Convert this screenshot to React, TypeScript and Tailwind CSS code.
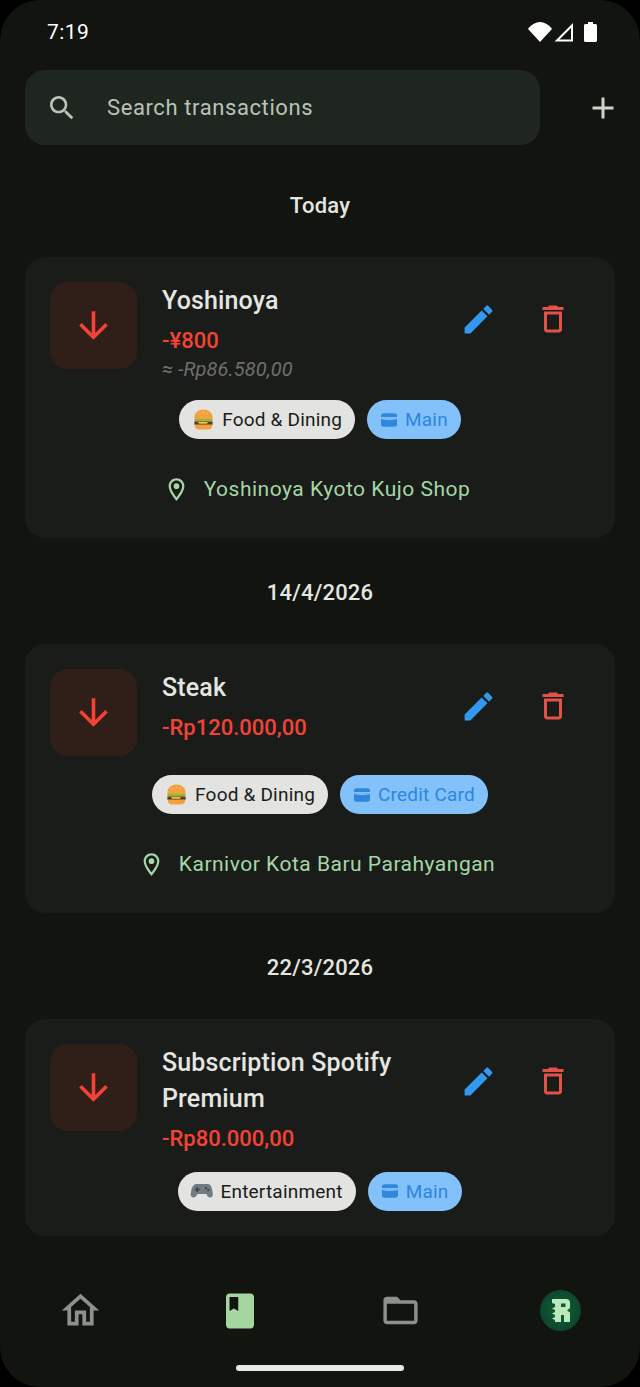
import React from 'react'

type Tx = {
  title: string
  amount: string
  converted?: string
  category: string
  categoryIcon: 'burger' | 'gamepad'
  account: string
  location?: string
}

const sections: { date: string; tx: Tx }[] = [
  {
    date: 'Today',
    tx: {
      title: 'Yoshinoya',
      amount: '-¥800',
      converted: '≈ -Rp86.580,00',
      category: 'Food & Dining',
      categoryIcon: 'burger',
      account: 'Main',
      location: 'Yoshinoya Kyoto Kujo Shop',
    },
  },
  {
    date: '14/4/2026',
    tx: {
      title: 'Steak',
      amount: '-Rp120.000,00',
      category: 'Food & Dining',
      categoryIcon: 'burger',
      account: 'Credit Card',
      location: 'Karnivor Kota Baru Parahyangan',
    },
  },
  {
    date: '22/3/2026',
    tx: {
      title: 'Subscription Spotify Premium',
      amount: '-Rp80.000,00',
      category: 'Entertainment',
      categoryIcon: 'gamepad',
      account: 'Main',
    },
  },
]

function Icon({ d, className }: { d: string; className: string }) {
  return (
    <svg viewBox="0 0 24 24" fill="currentColor" className={className}>
      <path d={d} />
    </svg>
  )
}

function Burger() {
  return (
    <svg viewBox="0 0 24 24" className="w-[23px] h-[23px] shrink-0 ml-[1px] mr-[-1px]">
      <path d="M2.500 10.500C2.500 4.500 7 1.500 12 1.500s9.500 3 9.500 9c0 .8-.5 1.200-1.200 1.200H3.700c-.7 0-1.200-.4-1.200-1.200z" fill="#f2a23a" />
      <circle cx="8" cy="5.500" r=".6" fill="#ffd98a" />
      <circle cx="12" cy="4.300" r=".6" fill="#ffd98a" />
      <circle cx="16" cy="5.500" r=".6" fill="#ffd98a" />
      <path d="M2.500 11.500h19v1.800c-1.500.7-3 .3-4.500.8-1.500.5-3 .3-5-.2-2-.4-3 .6-5 .2-2-.3-3 .2-4.500-.8z" fill="#8fb83f" />
      <path d="M2.500 14h19v3.500h-19z" fill="#5d3a1a" />
      <path d="M6 14.500h11l-1.500 2h-8z" fill="#fbc02d" />
      <path d="M3 17.500h18v1.200c0 2.200-2 3.800-4.500 3.800h-9C5 22.500 3 20.900 3 18.700z" fill="#f2a23a" />
    </svg>
  )
}

function Gamepad() {
  return (
    <svg viewBox="0 0 24 24" className="w-[24px] h-[24px] shrink-0 mr-[-2px]">
      <path
        d="M6.500 5h11c2.500 0 3.800 1.700 4.300 4.200l1 5.300c.4 2.300-.8 4-2.600 4-1.300 0-2.200-.7-3-1.700L16.500 15h-9l-1.200 1.800c-.8 1-1.700 1.700-3 1.700-1.800 0-3-1.700-2.600-4l1-5.300C3.200 6.700 4 5 6.500 5z"
        fill="#737a80"
      />
      <path d="M6.500 8h1.500v1.700h1.700v1.500H8v1.700H6.500v-1.700H4.800V9.700h1.700z" fill="#3c4043" />
      <circle cx="16" cy="9" r="1.100" fill="#3c4043" />
      <circle cx="18.200" cy="11.200" r="1.100" fill="#3c4043" />
    </svg>
  )
}

function Wallet() {
  return (
    <svg viewBox="0 0 18 15" className="w-[16px] h-[14px] shrink-0" fill="#2f86dc">
      <path d="M3 0h12a3 3 0 0 1 3 3v1H0V3a3 3 0 0 1 3-3z" />
      <path d="M0 5.500h18V12a3 3 0 0 1-3 3H3a3 3 0 0 1-3-3z" />
      <path d="M0 6.500c5 1.500 13 1.500 18 0v-1H0z" fill="#82c1fa" />
    </svg>
  )
}

function TxCard({ tx }: { tx: Tx }) {
  return (
    <div className="bg-[#1a1c19] rounded-[20px] p-[25px]">
      <div className="flex items-start">
        <div className="w-[87px] h-[87px] shrink-0 rounded-[18px] bg-[#301f19] flex items-center justify-center">
          <Icon
            className="w-[43px] h-[43px] text-[#f44336]"
            d="M20 12l-1.410-1.410L13 16.170V4h-2v12.170l-5.580-5.590L4 12l8 8 8-8z"
          />
        </div>
        <div className="flex-1 min-w-0 pl-[25px]">
          <div className="text-[25px] leading-[36px] font-medium tracking-[0.15px] text-[#e4e6e1] pr-[8px] pt-[1px] mb-[-1px]">
            {tx.title}
          </div>
          <div className="text-[22px] leading-[30px] font-medium text-[#f44336] mt-[7.500px] mb-[-1px]">{tx.amount}</div>
          {tx.converted && (
            <div className="text-[20px] leading-[24px] italic tracking-[0.1px] text-[#6d6f6b] mt-[2.500px]">{tx.converted}</div>
          )}
        </div>
        <div className="flex shrink-0">
          <button className="w-[74px] h-[74px] flex items-center justify-center text-[#3399f0]">
            <Icon
              className="w-[37px] h-[37px] ml-[-1px]"
              d="M3 17.250V21h3.750L17.810 9.940l-3.750-3.750L3 17.250zM20.710 7.040c.39-.39.39-1.020 0-1.410l-2.340-2.340c-.39-.39-1.020-.39-1.410 0l-1.830 1.830 3.750 3.750 1.830-1.830z"
            />
          </button>
          <button className="w-[74px] h-[74px] flex items-center justify-center text-[#e25249]">
            <Icon
              className="w-[36px] h-[36px]"
              d="M6 19c0 1.100.9 2 2 2h8c1.100 0 2-.9 2-2V7H6v12zM8 9h8v10H8V9zm7.500-5l-1-1h-5l-1 1H5v2h14V4z"
            />
          </button>
        </div>
      </div>

      <div className="flex justify-center gap-[12px] mt-[19px]">
        <div className="h-[39px] rounded-full bg-[#e3e3e1] flex items-center gap-[8px] pl-[12px] pr-[13px] text-[#1a1c19] text-[19px] tracking-[0.2px]">
          {tx.categoryIcon === 'burger' ? <Burger /> : <Gamepad />}
          <span className="pt-[2px]">{tx.category}</span>
        </div>
        <div className="h-[39px] rounded-full bg-[#82c1fa] flex items-center gap-[8px] pl-[14px] pr-[13px] text-[#2f86dc] text-[19px] tracking-[0.2px]">
          <Wallet />
          <span className="pt-[2px]">{tx.account}</span>
        </div>
      </div>

      {tx.location && (
        <div className="flex justify-center items-center gap-[13px] h-[50px] mt-[25px] mb-[-1.500px] pr-[6px] text-[#a5d6a7]">
          <svg viewBox="0 0 24 24" fill="currentColor" className="w-[27px] h-[27px] shrink-0 ml-[-1px] mr-[1px]">
            <path d="M12 2C8.130 2 5 5.130 5 9c0 5.250 7 13 7 13s7-7.750 7-13c0-3.870-3.130-7-7-7zM7 9c0-2.760 2.240-5 5-5s5 2.240 5 5c0 2.880-2.880 7.190-5 9.880C9.920 16.210 7 11.850 7 9z" />
            <circle cx="12" cy="9" r="2.500" />
          </svg>
          <span className="text-[21px] tracking-[0.5px] pt-[2px]">{tx.location}</span>
        </div>
      )}
    </div>
  )
}

export default function App() {
  return (
    <div className="w-[640px] h-[1387px] bg-black overflow-hidden" style={{ fontFamily: 'Roboto, sans-serif' }}>
      <div className="h-full rounded-[40px] bg-[#11140f] flex flex-col">
        {/* status bar */}
        <div className="h-[64px] shrink-0 flex items-center justify-between pl-[47px] pr-[43px] text-white">
          <span className="text-[21px] tracking-[0.4px] pt-[2px]">7:19</span>
          <div className="flex items-center">
            <svg viewBox="0 0 24 20" className="w-[24px] h-[20px]" fill="currentColor">
              <path d="M12 20L.5 7.500C.1 7 .1 6.300.6 5.900 3.800 2.600 7.700 0 12 0s8.200 2.600 11.400 5.900c.5.4.5 1.100.1 1.600z" />
            </svg>
            <svg viewBox="0 0 20 20" className="w-[20px] h-[20px] ml-[2px]" fill="none" stroke="currentColor" strokeWidth="2">
              <path d="M18 3.500v15H3z" />
            </svg>
            <svg viewBox="0 0 13 20" className="w-[13px] h-[20px] ml-[10px]" fill="currentColor">
              <path d="M4 0h5v2h2.500c.8 0 1.500.7 1.500 1.500v15c0 .8-.7 1.500-1.500 1.500h-10C.7 20 0 19.300 0 18.500v-15C0 2.700.7 2 1.500 2H4z" />
            </svg>
          </div>
        </div>

        {/* search row */}
        <div className="flex items-center mt-[6px] pl-[25px] pr-[25px] shrink-0">
          <div className="flex-1 h-[75px] rounded-[20px] bg-[#1f2620] flex items-center pl-[21px] text-[#b9c3b6]">
            <Icon
              className="w-[32px] h-[32px] shrink-0"
              d="M15.500 14h-.79l-.28-.27C15.410 12.590 16 11.110 16 9.500 16 5.910 13.090 3 9.500 3S3 5.910 3 9.500 5.910 16 9.500 16c1.610 0 3.090-.59 4.230-1.570l.27.28v.79l5 4.990L20.490 19l-4.990-5zm-6 0C7.010 14 5 11.990 5 9.500S7.010 5 9.500 5 14 7.010 14 9.500 11.990 14 9.500 14z"
            />
            <span className="ml-[29px] text-[22px] tracking-[0.6px]">Search transactions</span>
          </div>
          <div className="w-[75px] flex justify-end text-[#cfd3cb]">
            <Icon className="w-[36px] h-[36px] mr-[-6px]" d="M19 13h-6v6h-2v-6H5v-2h6V5h2v6h6v2z" />
          </div>
        </div>

        {/* transaction list */}
        <div className="flex-1 min-h-0 px-[25px]">
          {sections.map((s, i) => (
            <div key={s.date}>
              {i === 0 ? (
                <div className="h-[112px] pt-[8px] flex items-center justify-center text-[22px] font-medium text-[#e4e6e1] tracking-[0.2px]">
                  {s.date}
                </div>
              ) : (
                <div className="h-[106.500px] pt-[3px] flex items-center justify-center text-[22px] font-medium text-[#e4e6e1] tracking-[0.2px]">
                  {s.date}
                </div>
              )}
              <TxCard tx={s.tx} />
            </div>
          ))}
        </div>

        {/* bottom nav */}
        <div className="shrink-0">
          <div className="grid grid-cols-4 h-[42px] items-center justify-items-center">
            <Icon
              className="w-[45px] h-[45px] text-[#8e908c]"
              d="M12 5.690l5 4.500V18h-2v-6H9v6H7v-7.810l5-4.500M12 3L2 12h3v8h6v-6h2v6h6v-8h3L12 3z"
            />
            <Icon
              className="w-[42px] h-[42px] text-[#a5d6a0]"
              d="M18 2H6c-1.100 0-2 .9-2 2v16c0 1.100.9 2 2 2h12c1.100 0 2-.9 2-2V4c0-1.100-.9-2-2-2zM6 4h5v8l-2.500-1.500L6 12V4z"
            />
            <Icon
              className="w-[41px] h-[41px] text-[#8e908c]"
              d="M20 6h-8l-2-2H4c-1.100 0-1.990.9-1.990 2L2 18c0 1.100.9 2 2 2h16c1.100 0 2-.9 2-2V8c0-1.100-.9-2-2-2zm0 12H4V8h16v10z"
            />
            <div className="w-[41px] h-[41px] rounded-full bg-radial from-[#11643c] to-[#0a3b25] flex items-center justify-center">
              <svg viewBox="0 0 19 23" className="w-[19px] h-[23px]" fill="#bce9bc">
                <path
                  fillRule="evenodd"
                  d="M1 0H15a4 4 0 0 1 4 4v5l-3 2.500 3 2V23h-6v-7h-3v7H4v-2L1 19.500 4 18v-2L1 14.500 4 13v-2L1 9.500 4 8V5L1 4zM10 4.500v3.500h4.500V4.500z"
                />
              </svg>
            </div>
          </div>
          <div className="flex justify-center pt-[35px] pb-[16px]">
            <div className="w-[168px] h-[6px] rounded-full bg-[#e8eae6]" />
          </div>
        </div>
      </div>
    </div>
  )
}
